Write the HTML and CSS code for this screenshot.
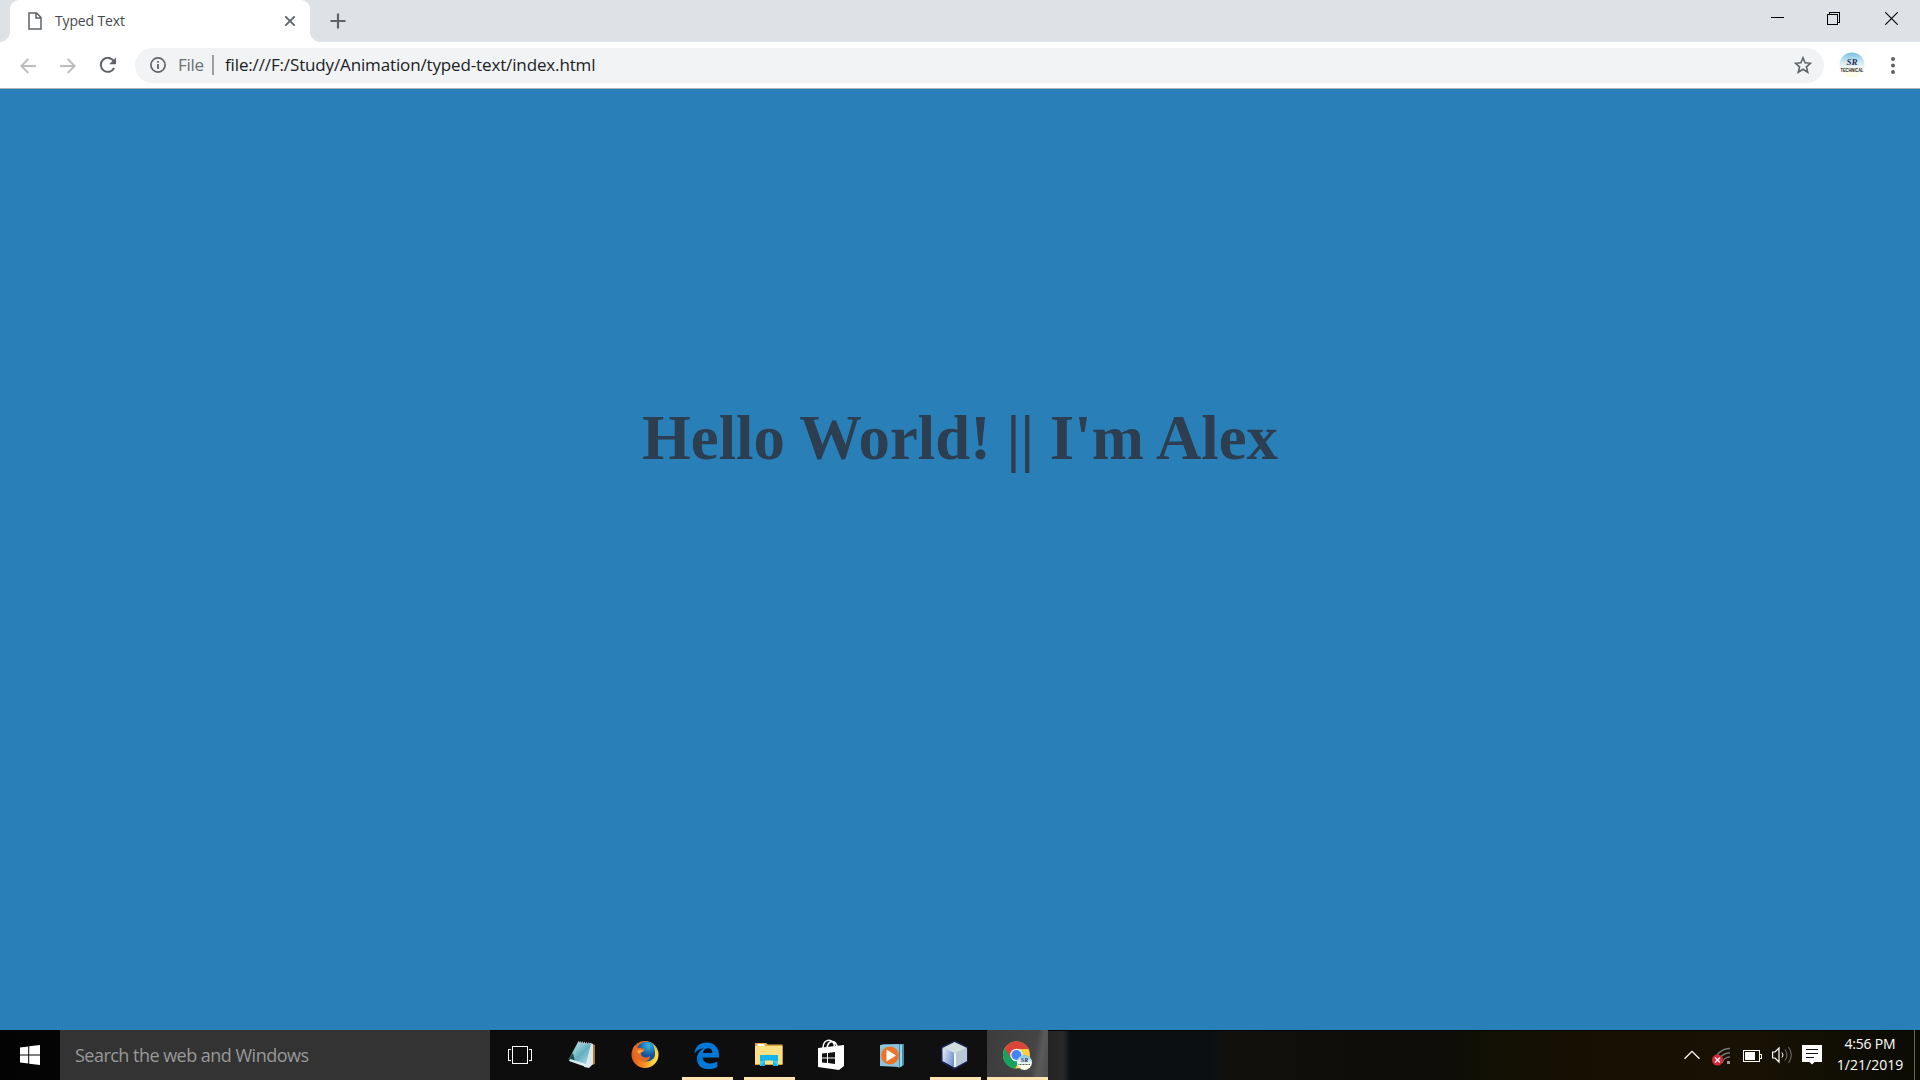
FILE: index.html
```html
<!DOCTYPE html>
<html lang="en">
<head>
<meta charset="utf-8">
<title>Typed Text</title>
<link rel="stylesheet" href="styles.css">
</head>
<body>
<div class="screen">
  <header class="tabstrip">
    <div class="tab">
      <svg class="tab-page" width="14" height="18" viewBox="0 0 14 18" fill="none" stroke="#5f6368" stroke-width="1.5"><path d="M1 1h7.500L13 5.500V17H1zM8 1v5h5"/></svg>
      <span class="tab-title">Typed Text</span>
      <svg class="tab-close" width="12" height="12" viewBox="0 0 12 12" stroke="#5f6368" stroke-width="1.900"><path d="M1.300 1.300l9.400 9.400M10.700 1.300l-9.400 9.400"/></svg>
    </div>
    <svg class="newtab" width="16" height="16" viewBox="0 0 16 16" stroke="#5f6368" stroke-width="2.200"><path d="M8 .5v15M.5 8h15"/></svg>
    <div class="winbtns">
      <svg width="13" height="13" viewBox="0 0 13 13" stroke="#000" shape-rendering="crispEdges"><path d="M0 5.500h13"/></svg>
      <svg class="restore" width="13" height="13" viewBox="0 0 13 13" fill="none" stroke="#000" shape-rendering="crispEdges"><path d="M.5 2.500h10v10H.5zM2.500 2.500V.5h10v10h-2"/></svg>
      <svg width="13" height="13" viewBox="0 0 13 13" stroke="#000" stroke-width="1.100"><path d="M.3.300l12.400 12.400M12.700.300L.3 12.700"/></svg>
    </div>
  </header>
  <nav class="toolbar">
    <svg class="back" width="16" height="16" viewBox="0 0 16 16" fill="none" stroke="#babcbe" stroke-width="1.800"><path d="M16 8H1.500M8.300 1L1.300 8l7 7"/></svg>
    <svg class="forward" width="16" height="16" viewBox="0 0 16 16" fill="none" stroke="#babcbe" stroke-width="1.800"><path d="M0 8h14.500M7.700 1l7 7-7 7"/></svg>
    <svg class="reload" width="18" height="17" viewBox="0 0 18 17" fill="none" stroke="#5f6368" stroke-width="2"><path d="M14.700 4A7 7 0 1 0 15.100 11"/><path d="M17 .5V7.300h-6.800z" fill="#5f6368" stroke="none"/></svg>
    <div class="omnibox">
      <svg class="info" width="16" height="16" viewBox="0 0 16 16"><circle cx="8" cy="8" r="7.100" fill="none" stroke="#5f6368" stroke-width="1.700"/><path d="M7.100 7h1.800v5H7.100zM7.100 4h1.800v1.800H7.100z" fill="#5f6368"/></svg>
      <span class="scheme">File</span>
      <span class="bar"></span>
      <span class="url">file:///F:/Study/Animation/typed-text/index.html</span>
      <svg class="star" width="18" height="18" viewBox="0 0 18 18" fill="none" stroke="#5f6368" stroke-width="1.600"><path d="M9 1.800l2.100 5 5.400.5-4.100 3.500 1.300 5.400L9 13.300l-4.700 2.900 1.300-5.400L1.500 7.300l5.400-.5z"/></svg>
    </div>
    <svg class="avatar" width="26" height="26" viewBox="0 0 26 26">
      <defs><linearGradient id="sky" x2="0" y2="1"><stop offset="0" stop-color="#79bfe3"/><stop offset=".4" stop-color="#d4ebf2"/><stop offset=".7" stop-color="#fdfdf0"/><stop offset="1" stop-color="#fdfce6"/></linearGradient></defs>
      <circle cx="13" cy="13" r="12.500" fill="url(#sky)"/>
      <text class="sr" x="13" y="12.500" text-anchor="middle">SR</text>
      <text class="tech" x="13" y="19.500" text-anchor="middle" textLength="23" lengthAdjust="spacingAndGlyphs">TECHNICAL</text>
    </svg>
    <svg class="more" width="4" height="17" viewBox="0 0 4 17" fill="#5f6368"><circle cx="2" cy="2" r="2"/><circle cx="2" cy="8.500" r="2"/><circle cx="2" cy="15" r="2"/></svg>
  </nav>
  <main class="page"><h1>Hello World! || I'm Alex</h1></main>
  <footer class="taskbar">
    <div class="start"><svg width="20" height="20" viewBox="0 0 20 20" fill="#fff"><path d="M0 2.600l8.200-1.200v8H0zM9.200 1.200L20 0v9.400H9.200zM0 10.400h8.200v8.200L0 17.400zM9.200 10.400H20V20L9.200 18.700z"/></svg></div>
    <div class="search">Search the web and Windows</div>
    <div class="apps">
      <div class="app taskview"><svg width="32" height="32" viewBox="0 0 32 32" fill="none" stroke="#fff" shape-rendering="crispEdges"><path d="M8.500 7.500h15v17h-15zM7 10.500H4.500v11H7M25 10.500h2.500v11H25"/></svg></div>
      <div class="app notepad"><svg width="32" height="32" viewBox="0 0 32 32">
        <defs><linearGradient id="pad" x2="1" y2="1"><stop offset="0" stop-color="#d9f1f3"/><stop offset=".55" stop-color="#63b0be"/><stop offset="1" stop-color="#b5dfe5"/></linearGradient></defs>
        <path d="M23 4l6 2v19l-6 2z" fill="#a87a35"/><path d="M24 4l3 1v20l-4 4-5-1z" fill="#dce8ec"/><path d="M12 3l13 2-5 20-17-5z" fill="url(#pad)"/><path d="M2 20l5-6 2 8z" fill="#24505a"/><path d="M4 20l17 5-1 3-17-6z" fill="#d9eef1"/><path d="M12 3l14 2" stroke="#b8c3c6" stroke-width="2" stroke-dasharray="1 1"/></svg></div>
      <div class="app"><svg width="32" height="32" viewBox="0 0 32 32">
        <defs><linearGradient id="fox" x2="1" y2=".2"><stop offset="0" stop-color="#d6501f"/><stop offset=".6" stop-color="#f58b20"/><stop offset="1" stop-color="#ffe34a"/></linearGradient><radialGradient id="globe" cx=".6" cy=".2"><stop offset="0" stop-color="#32b7ea"/><stop offset="1" stop-color="#17539b"/></radialGradient></defs>
        <circle cx="16" cy="15.500" r="13.500" fill="url(#fox)"/><circle cx="17.500" cy="12.500" r="10" fill="url(#globe)"/>
        <path d="M4 9l2-3 3 3c3-1 4 1 7 1-1 3-4 3-4 5 0 3 5 5 9 2 0 5-6 7-10 4-4-1-8-6-7-12z" fill="#e76b24"/><path d="M9 11c3-1 4 1 6 0-1 2-4 2-5 4-2-1-2-3-1-4z" fill="#f8ab42"/><path d="M24 5c6 7 6 16-2 20 5-5 5-13 2-20z" fill="#ffd63c"/></svg></div>
      <div class="app open"><svg width="32" height="32" viewBox="0 0 32 32"><path fill="#0078d7" d="M3.300 14.300C4.300 7.500 9 3.500 15.600 3.500 23.500 3.500 28 9 28 16v2.600H11.700c.2 4 3.300 5.800 7.300 5.800 2.800 0 5.100-.7 7.300-2v5.700c-2.600 1.400-5.500 2-8.700 2-7 0-11.600-4-11.600-10.200 0-5.200 3-9.100 7.300-11-4.300.8-7.700 2.400-10 5.400zM12 14h9.400c0-3-1.600-4.700-4.500-4.700-2.700 0-4.500 1.800-4.900 4.700z"/></svg></div>
      <div class="app open"><svg width="32" height="32" viewBox="0 0 32 32"><path d="M2 4h11l2 1.500h14.500V26H2z" fill="#dda93c"/><path d="M2 7h27.500v18H2z" fill="#ffdf83"/><path d="M4.500 5h7v2h-7z" fill="#fff"/><path d="M7 16h18v11h-5v-5.500h-8V27H7z" fill="#13b5ea"/><path d="M7 22h5l-5 5zM20 22h5v5z" fill="#48cdf5"/></svg></div>
      <div class="app"><svg width="32" height="32" viewBox="0 0 32 32"><path d="M8 9C8-1 19-1 19.500 7M12 8C14 1 20 1 22 7" fill="none" stroke="#fff" stroke-width="1.600"/><path d="M3 9l26-3v21l-5 4-21-3z" fill="#fff"/><path d="M7 14.600l5-.6v4.500H7zM13 13.900l7-.8v5.400h-7zM7 19.500h5V24l-5-.6zM13 19.500h7V25l-7-.9z" fill="#111"/></svg></div>
      <div class="app media"><svg width="32" height="32" viewBox="0 0 32 32"><path d="M6 5h22v21l-5 3-4-3z" fill="#438ca9"/><path d="M24 6l2-1v22l-2 1z" fill="#9ad5e8"/><path d="M4 6l19-1v23L4 27z" fill="#8fc3d9"/><circle cx="14" cy="16.500" r="9" fill="#ed7427"/><path d="M10.500 10.500v12l9.500-6z" fill="#fff"/></svg></div>
      <div class="app open"><svg width="32" height="32" viewBox="0 0 32 32">
        <defs><linearGradient id="cube" x2="1" y2=".4"><stop offset="0" stop-color="#e8f0fa"/><stop offset="1" stop-color="#7390cf"/></linearGradient></defs>
        <path d="M15.500 2.500L28 8.500v14l-12.500 7L3 22.500v-14z" fill="#9daab8" stroke="#182050" stroke-width="2"/><path d="M3.500 9L16 14v14.500L3.500 22z" fill="url(#cube)"/><path d="M16 14l12-5v13l-12 6.500z" fill="#b9c6d3"/><path d="M15.500 3L28 9l-12 5L3.500 9z" fill="#d1dfdf"/><path d="M16 14v14" stroke="#eef7ff" stroke-width="2"/></svg></div>
      <div class="app open active"><svg width="32" height="32" viewBox="0 0 32 32"><circle cx="15.500" cy="16" r="13.500" fill="#ffcd43"/><path d="M15.500 16L3.800 9.200A13.500 13.500 0 0 0 14 29.500l6-10z" fill="#16a15f"/><path d="M15.500 10H27.600A13.500 13.500 0 0 0 3.800 9.200L10 19.500z" fill="#db4437"/><circle cx="15.500" cy="16" r="6.300" fill="#f5f5f5"/><circle cx="15.500" cy="16" r="5" fill="#4285f4"/><circle cx="23.500" cy="23.500" r="7.500" fill="url(#sky)"/><text class="mini-sr" x="23.500" y="23" text-anchor="middle">SR</text><path d="M17.500 25.500h12" stroke="#555" stroke-dasharray="1 .5"/></svg></div>
    </div>
    <div class="tray">
      <svg class="chevron" width="16" height="10" viewBox="0 0 16 10" fill="none" stroke="#fff" stroke-width="1.300"><path d="M.5 8.800L8 1.300l7.500 7.500"/></svg>
      <svg class="wifi" width="20" height="20" viewBox="0 0 20 20" fill="none" stroke="#777" stroke-width="1.500"><path d="M2 17A16 16 0 0 1 18 2.500M6 17A12 12 0 0 1 18 6.700M10 17A8 8 0 0 1 18 11"/><path d="M15 15h3v3h-3z" fill="#999" stroke="none"/><circle cx="5.500" cy="14" r="5.500" fill="#dc2636" stroke="none"/><path d="M3 11.500l5 5M8 11.500l-5 5" stroke="#fff" stroke-width="1.300"/></svg>
      <svg class="battery" width="19" height="12" viewBox="0 0 19 12" fill="none" stroke="#fff" shape-rendering="crispEdges"><path d="M.5.500h16v11H.5zM17 4.500h1.500v4H17"/><path d="M2 2h10v8H2z" fill="#fff" stroke="none"/></svg>
      <svg class="volume" width="21" height="18" viewBox="0 0 21 18" fill="none"><path d="M.6 6H3l4-4v14l-4-4H.6z" stroke="#fff" stroke-width="1.200"/><path d="M10 6.500q2 2.500 0 5" stroke="#fff"/><path d="M13 3.500q4 5.500 0 11M16.500 1q5.500 8 0 16" stroke="#777"/></svg>
      <svg class="notice" width="20" height="20" viewBox="0 0 20 20"><path d="M0 0h20v17h-7.500L10 19.500 7.500 17H0z" fill="#fff"/><path d="M4 4.500h12M4 8.500h12M4 12.500h8" stroke="#111"/></svg>
      <div class="clock"><span class="time">4:56 PM</span><span class="date">1/21/2019</span></div>
      <span class="peek"></span>
    </div>
  </footer>
</div>
</body>
</html>
```
FILE: styles.css
```css
* { box-sizing: border-box; }
body { margin: 0; overflow: hidden; font-family: "Open Sans", "Noto Sans", sans-serif; }
svg { display: block; flex: none; }
span { white-space: nowrap; }
.screen { width: 1920px; height: 1080px; display: flex; flex-direction: column; }

.tabstrip { height: 42px; flex: none; display: flex; background: #dee1e6; padding-left: 10px; }
.tab { position: relative; width: 300px; height: 42px; display: flex; align-items: flex-start; background: #fff; border-radius: 9px 9px 0 0; padding-left: 18px; }
.tab::before, .tab::after { content: ""; position: absolute; bottom: 0; width: 10px; height: 10px; }
.tab::before { left: -10px; background: radial-gradient(circle at 0 0, transparent 9.500px, #fff 10px); }
.tab::after { right: -10px; background: radial-gradient(circle at 100% 0, transparent 9.500px, #fff 10px); }
.tab-page { margin-top: 12px; }
.tab-title { flex: none; margin: 10px 0 0 13px; font-size: 14px; line-height: 21px; letter-spacing: -.15px; color: #45494d; }
.tab-close { margin: 15px 14px 0 auto; }
.newtab { margin: 13px 0 0 19.500px; }
.winbtns { margin-left: auto; display: flex; gap: 43px; padding: 12px 22px 0 0; }
.restore { margin-right: 2px; }

.toolbar { height: 47px; flex: none; display: flex; align-items: center; background: #fff; border-bottom: 1px solid #aeb1b5; padding: 0 25px 0 20px; }
.toolbar .back, .toolbar .forward, .toolbar .reload { margin-top: 1px; }
.forward { margin-left: 24px; }
.reload { margin-left: 23px; }
.omnibox { flex: 1; height: 35px; margin: 0 15px 0 18px; padding: 0 12px 0 15px; display: flex; align-items: center; background: #f1f3f4; border-radius: 18px; }
.scheme { width: 34px; margin-left: 12px; font-size: 17px; letter-spacing: -.3px; color: #6b7075; line-height: 24px; }
.bar { width: 2px; height: 20px; background: #9b9fa3; }
.url { margin-left: 11px; font-size: 17px; letter-spacing: -.14px; line-height: 24px; color: #202124; }
.star { margin-left: auto; }
.more { margin-left: 26px; }
.sr { font: italic bold 9px "Liberation Serif", serif; fill: #292b55; }
.tech { font: bold 4.500px "Liberation Sans", sans-serif; fill: #222; }
.mini-sr { font: italic bold 6px "Liberation Serif", serif; fill: #292b55; }

.page { flex: 1; background: #2980b9; display: flex; justify-content: center; align-items: flex-start; }
h1 { margin: 312px 0 0; font: bold 62.700px/74px "Liberation Serif", "Times New Roman", serif; color: #2c3e50; white-space: nowrap; }

.taskbar { height: 50px; flex: none; display: flex; background: linear-gradient(90deg, #030303 0, #0c0c0c 490px, #101010 1000px, #292929 1063px, #0c0f11 1070px, #0c0f11 1210px, #12100c 1230px, #0d0c09 1440px, #111004 1480px, #171003 1600px, #171204 1750px, #0b0b02 1920px); box-shadow: inset 0 1px #020406; }
.start { width: 60px; display: grid; place-items: center; }
.search { width: 430px; background: #333; padding-left: 15px; font-size: 18px; letter-spacing: -.52px; line-height: 51px; color: #999; white-space: nowrap; }
.apps { display: flex; gap: 1px; margin-left: 1px; }
.app { width: 61px; height: 50px; padding: 9px 0 0 14px; }
.taskview, .media, .notepad { padding-left: 13px; }
.open { background: linear-gradient(#ffe3b0, #ffe3b0) 5px 47px / 51px 3px no-repeat; }
.active { background: linear-gradient(#ffe3b0, #ffe3b0) 0 47px / 61px 3px no-repeat, linear-gradient(100deg, #3c3c3c 0, #454545 74%, #5a5a5a 84%, #4b4b4b 100%); }
.tray { margin-left: auto; display: flex; align-items: flex-start; }
.chevron { margin-top: 20px; }
.wifi { margin: 16px 0 0 12px; }
.battery { margin: 20px 0 0 11px; }
.volume { margin: 16px 0 0 10px; }
.notice { margin: 15px 0 0 9px; }
.clock { width: 92px; display: flex; flex-direction: column; align-items: center; color: #fff; font-size: 14px; line-height: 21px; padding: 3px 0 0 4px; }
.time { letter-spacing: -.2px; }
.date { letter-spacing: 0; }
.peek { width: 1px; height: 50px; background: #64645c; margin-right: 5px; }
```
